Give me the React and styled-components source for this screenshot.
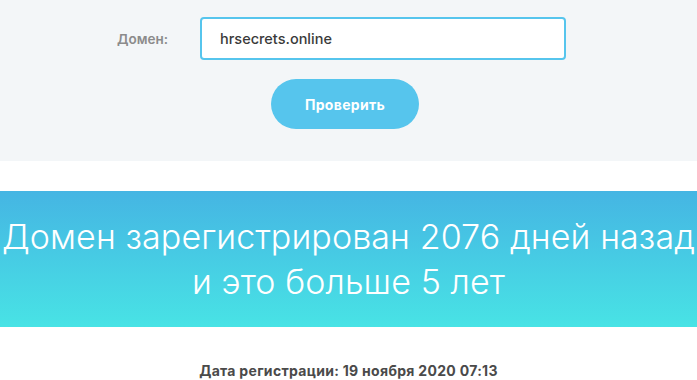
import React from "react";
import styled, { createGlobalStyle } from "styled-components";

const Global = createGlobalStyle`
  html, body { margin: 0; padding: 0; background: #ffffff; }
  body { font-family: Inter, "Noto Sans", sans-serif; overflow: hidden; }
  * { box-sizing: border-box; }
`;

const Page = styled.div`
  width: 697px;
  height: 380px;
  overflow: hidden;
  display: flex;
  flex-direction: column;
  & > * { flex-shrink: 0; }
`;

const FormSection = styled.section`
  background: #f3f6f8;
  padding: 17px 0 32px;
  display: flex;
  flex-direction: column;
  align-items: center;
  gap: 19px;
`;

const Row = styled.div`
  align-self: stretch;
  display: grid;
  grid-template-columns: 168px 366px;
  column-gap: 32px;
  align-items: center;
`;

const Label = styled.label`
  text-align: right;
  font-size: 13.5px;
  font-weight: 600;
  color: #8b8b8b;
`;

const Input = styled.input`
  height: 43px;
  width: 366px;
  border: 2px solid #56c5ed;
  border-radius: 4px;
  background: #ffffff;
  padding: 0 18px;
  font-family: inherit;
  font-size: 14.5px;
  font-weight: 500;
  color: #3a3a3a;
  outline: none;
`;

const Button = styled.button`
  width: 148px;
  height: 50px;
  margin-right: 7px;
  border: none;
  border-radius: 25px;
  background: #56c5ed;
  color: #ffffff;
  font-family: inherit;
  font-size: 14px;
  font-weight: 700;
  letter-spacing: 0.3px;
  cursor: pointer;
`;

const Banner = styled.section`
  margin-top: 30px;
  height: 136px;
  background: linear-gradient(180deg, #45b5e3 0%, #48e3e5 100%);
  display: flex;
  flex-direction: column;
  align-items: center;
  justify-content: center;
  white-space: nowrap;
`;

const BannerLine = styled.div`
  font-size: 34px;
  font-weight: 300;
  letter-spacing: 0.1px;
  line-height: 45px;
  color: #ffffff;
  text-align: center;
`;

const DateLine = styled.p`
  margin: 34px 0 0;
  text-align: center;
  font-size: 14px;
  font-weight: 700;
  letter-spacing: 0.3px;
  line-height: 20px;
  color: #4a4a4a;
`;

export default function App() {
  return (
    <>
      <Global />
      <Page>
        <FormSection>
          <Row>
            <Label htmlFor="domain">Домен:</Label>
            <Input id="domain" defaultValue="hrsecrets.online" />
          </Row>
          <Button>Проверить</Button>
        </FormSection>
        <Banner>
          <BannerLine>Домен зарегистрирован 2076 дней назад</BannerLine>
          <BannerLine>и это больше 5 лет</BannerLine>
        </Banner>
        <DateLine>Дата регистрации: 19 ноября 2020 07:13</DateLine>
      </Page>
    </>
  );
}
